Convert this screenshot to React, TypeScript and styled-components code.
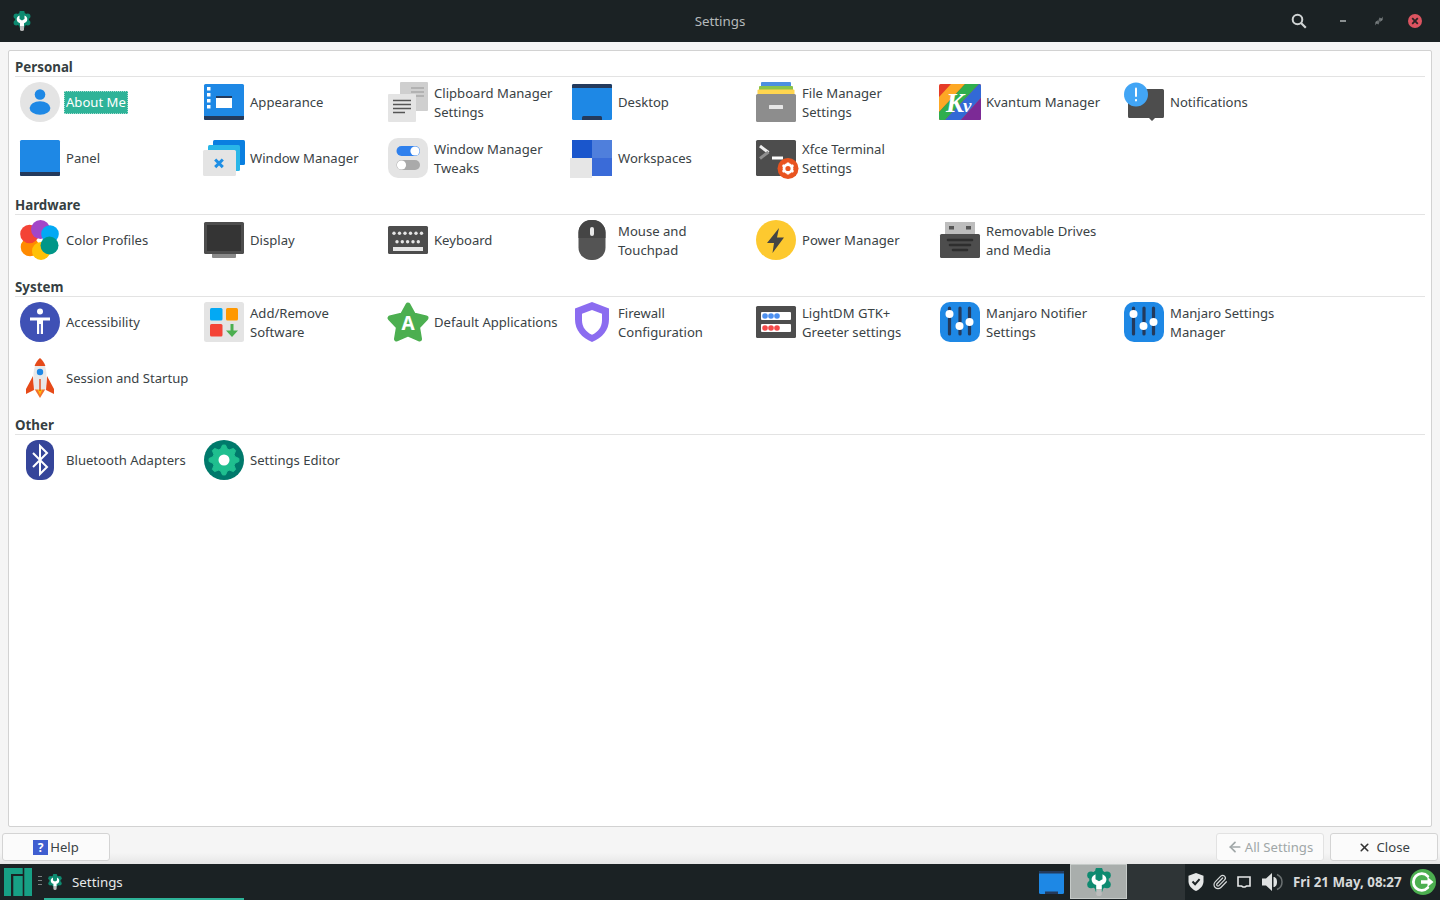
import React from "react";
import styled, { createGlobalStyle } from "styled-components";
import { ArrowLeft, Paperclip, X } from "lucide-react";

const Global = createGlobalStyle`
  html, body { margin: 0; padding: 0; height: 100%; overflow: hidden; }
  body { font-family: "Noto Sans", "Open Sans", sans-serif; font-size: 13.33px; color: #3a4245; }
  #root { height: 100%; }
`;

const Page = styled.div`
  width: 1440px;
  height: 900px;
  display: flex;
  flex-direction: column;
  background: #f5f5f5;
`;

const TitleBar = styled.header`
  height: 42px;
  flex: none;
  background: #1b2224;
  display: grid;
  grid-template-columns: 1fr auto 1fr;
  align-items: center;
  padding: 0 7px 0 12px;
`;

const TitleLeft = styled.div`
  display: flex;
  align-items: center;
`;

const TitleText = styled.div`
  color: #b4b9ba;
  font-size: 13.33px;
  line-height: 18px;
  margin: -1px 0 0 -5px;
`;

const TitleActions = styled.div`
  display: flex;
  justify-content: flex-end;
  align-items: center;
`;

const TitleAction = styled.div<{ $gap?: number }>`
  width: 36px;
  margin-right: ${(p) => p.$gap ?? 0}px;
  display: flex;
  justify-content: center;
`;

const Body = styled.main`
  flex: 1;
  display: flex;
  padding: 8px 8px 0;
  min-height: 0;
`;

const Frame = styled.div`
  flex: 1;
  background: #fff;
  border: 1px solid #d2d2d2;
  border-radius: 2px;
  padding: 6px 6px 0;
`;

const Section = styled.section`
  margin-bottom: 12px;
`;

const SectionTitle = styled.h2`
  margin: 0;
  height: 20px;
  box-sizing: border-box;
  border-bottom: 1px solid #e3e3e3;
  font-size: 13.33px;
  font-weight: 700;
  line-height: 20px;
  color: #363f42;
`;

const Grid = styled.div`
  display: grid;
  grid-template-columns: repeat(7, 184px);
  grid-auto-rows: 50px;
  row-gap: 6px;
  padding-left: 5px;
`;

const Item = styled.div`
  display: flex;
  align-items: center;
  gap: 6px;
`;

const IconSlot = styled.div`
  width: 40px;
  height: 40px;
  flex: none;
  svg { display: block; overflow: visible; }
`;

const Label = styled.div<{ $selected?: boolean; $double?: boolean }>`
  white-space: pre-line;
  font-size: 13.1px;
  line-height: 19px;
  padding-top: ${(p) => (p.$double ? "2px" : "0")};
  color: ${(p) => (p.$selected ? "#fff" : "#3a4245")};
  ${(p) =>
    p.$selected
      ? `background: #2eb398;
         margin-left: -2px;
         padding: 1px;
         line-height: 21px;
         & > span { display: block; padding: 0 1px; outline: 1px dotted rgba(255,255,255,.55); }`
      : ""}
`;

const ActionBar = styled.div`
  flex: none;
  height: 37px;
  padding: 6px 2px 3px;
  box-sizing: border-box;
  display: flex;
  justify-content: space-between;
  background: linear-gradient(#f5f5f5 70%, #e6e6e6);
`;

const ActionGroup = styled.div`
  display: flex;
  gap: 6px;
`;

const Btn = styled.button<{ $disabled?: boolean }>`
  width: 108px;
  height: 28px;
  box-sizing: border-box;
  display: flex;
  align-items: center;
  justify-content: center;
  gap: 2px;
  padding: 0;
  background: #fbfbfb;
  border: 1px solid ${(p) => (p.$disabled ? "#e2e2e2" : "#d4d4d4")};
  border-radius: 3px;
  font-family: inherit;
  font-size: 13.1px;
  color: ${(p) => (p.$disabled ? "#a0a7a8" : "#3a4245")};
`;

const HelpMark = styled.span`
  width: 15px;
  height: 15px;
  background: #3f5ed0;
  color: #fff;
  font-size: 12px;
  font-weight: 700;
  line-height: 15px;
  text-align: center;
`;

const Taskbar = styled.footer`
  flex: none;
  height: 36px;
  background: #1b2224;
  display: flex;
  align-items: stretch;
  padding-left: 4px;
`;

const LogoSlot = styled.div`
  display: flex;
  align-items: center;
  width: 28px;
  flex: none;
`;

const Handle = styled.div`
  width: 4px;
  margin: 12px 2px 0 6px;
  height: 12px;
  flex: none;
  background: repeating-linear-gradient(#7b8182 0 1px, transparent 1px 4px);
`;

const Task = styled.div`
  width: 200px;
  flex: none;
  box-sizing: border-box;
  border-bottom: 2px solid #2eb398;
  display: flex;
  align-items: center;
  padding: 1px 0 0 3px;
  gap: 9px;
  color: #e6e8e8;
  font-size: 13.33px;
`;

const Spacer = styled.div`
  flex: 1;
`;

const Pager = styled.div`
  width: 31px;
  display: flex;
  align-items: center;
  flex: none;
`;

const WorkspaceActive = styled.div`
  width: 57px;
  height: 35px;
  box-sizing: border-box;
  background: #a9aeac;
  border: 1px solid #c6cbc9;
  display: flex;
  align-items: center;
  justify-content: center;
  flex: none;
`;

const WorkspaceIdle = styled.div`
  width: 58px;
  background: #2e3436;
  flex: none;
`;

const Tray = styled.div`
  display: flex;
  align-items: center;
  width: 108px;
  flex: none;
`;

const TraySlot = styled.div<{ $w: number }>`
  width: ${(p) => p.$w}px;
  display: flex;
  justify-content: center;
  flex: none;
`;

const Clock = styled.div`
  flex: none;
  width: 117px;
  box-sizing: border-box;
  display: flex;
  align-items: center;
  color: #d6d9d9;
  font-size: 13.33px;
  font-weight: 700;
  white-space: nowrap;
`;

const LogoutSlot = styled.div`
  flex: none;
  width: 30px;
  display: flex;
  align-items: center;
`;

type IconProps = { s?: number };
const Svg: React.FC<{ children: React.ReactNode; s?: number; vb?: string }> = ({ children, s = 40, vb = "0 0 40 40" }) => (
  <svg width={s} height={s} viewBox={vb} xmlns="http://www.w3.org/2000/svg">
    {children}
  </svg>
);

const AboutIcon = () => (
  <Svg>
    <circle cx="20" cy="20" r="20" fill="#e4e4e4" />
    <circle cx="20" cy="12.5" r="5.3" fill="#1e88e5" />
    <ellipse cx="20" cy="26" rx="10.4" ry="6.8" fill="#1e88e5" />
  </Svg>
);
const AppearanceIcon = () => (
  <Svg>
    <rect y="2" width="40" height="36" rx="1.5" fill="#1e88e5" />
    <path d="M0 34h40v2.5a1.5 1.5 0 0 1-1.5 1.5h-37A1.5 1.5 0 0 1 0 36.500z" fill="#243a5c" />
    <path d="M3 5h3.500v3.500H3zM3 11h3.500v3.500H3zM3 17h3.500v3.500H3zM3 23h3.500v3.500H3z" fill="#fff" />
    <rect x="12" y="14" width="16" height="12" fill="#fff" />
    <rect x="12" y="14" width="16" height="2" fill="#243a5c" />
  </Svg>
);
const ClipboardIcon = () => (
  <Svg>
    <rect x="12" width="28" height="29" rx="1" fill="#cfcfcf" />
    <path d="M23 6h13M23 10h13M28 14h8" stroke="#a9a9a9" strokeWidth="1.4" />
    <rect y="12" width="28" height="28" rx="1" fill="#e4e4e4" />
    <path d="M5 18.500h18M5 22.500h18M5 26.500h18M5 30.500h12" stroke="#555" strokeWidth="1.4" />
  </Svg>
);
const DesktopIcon = () => (
  <Svg>
    <rect y="2" width="40" height="36" rx="1.5" fill="#1e88e5" />
    <path d="M0 6V3.500A1.500 1.500 0 0 1 1.500 2h37A1.500 1.500 0 0 1 40 3.500V6z" fill="#243a5c" />
    <path d="M10 38v-2.500A1.500 1.500 0 0 1 11.500 34h17a1.500 1.500 0 0 1 1.500 1.500V38z" fill="#243a5c" />
  </Svg>
);
const FileIcon = () => (
  <Svg>
    <rect x="5" width="30" height="8" rx="1" fill="#4b8fe0" />
    <rect x="3" y="4" width="34" height="8" rx="1" fill="#8bc34a" />
    <rect x="1.500" y="7.500" width="37" height="8" rx="1" fill="#ffd54f" />
    <rect y="12" width="40" height="28" rx="1.500" fill="#8d8d8d" />
    <rect x="13" y="23" width="14" height="4" rx=".5" fill="#e6e6e6" />
  </Svg>
);
const KvantumIcon = () => (
  <svg width="42" height="40" viewBox="0 0 42 40" style={{ marginLeft: -1 }}>
    <defs>
      <clipPath id="kvclip">
        <rect y="2" width="42" height="36" rx="1.500" />
      </clipPath>
    </defs>
    <g clipPath="url(#kvclip)">
      <rect y="2" width="42" height="36" fill="#e53c27" />
      <path d="M12 2h14L0 30V15z" fill="#fda825" />
      <path d="M26 2h14L6 38H0v-8z" fill="#2fae4e" />
      <path d="M40 2h2v14L22 38H6z" fill="#3269d6" />
      <path d="M42 16v22H22z" fill="#7c2a96" />
    </g>
    <text x="7" y="30" fontFamily="'Liberation Serif', serif" fontStyle="italic" fontWeight="700" fontSize="27" fill="#fff">K</text>
    <text x="24" y="30" fontFamily="'Liberation Serif', serif" fontStyle="italic" fontWeight="700" fontSize="19" fill="#fff">v</text>
  </svg>
);
const NotifyIcon = () => (
  <Svg>
    <path d="M5 7h33.500A1.500 1.500 0 0 1 40 8.500v26a1.500 1.500 0 0 1-1.500 1.500H31l-3 3-3-3H5.500A1.500 1.500 0 0 1 4 34.500V8z" fill="#4d4d4d" />
    <circle cx="12" cy="12.500" r="12" fill="#42a5f5" />
    <rect x="11" y="5.500" width="2" height="9.500" rx="1" fill="#fff" />
    <rect x="11" y="17" width="2" height="2.400" rx=".8" fill="#fff" />
  </Svg>
);
const PanelIcon = () => (
  <Svg>
    <rect y="2" width="40" height="36" rx="1.500" fill="#1e88e5" />
    <path d="M0 34h40v2.500a1.500 1.500 0 0 1-1.500 1.500h-37A1.500 1.500 0 0 1 0 36.500z" fill="#243a5c" />
  </Svg>
);
const WindowIcon = () => (
  <Svg>
    <rect x="9" y="2" width="32" height="25" rx="1.500" fill="#0a7fe0" />
    <rect x="4" y="7" width="32" height="26" rx="1.500" fill="#29b6e8" />
    <rect x="-1" y="12" width="33" height="26" rx="1.500" fill="#e4e4e4" />
    <path d="M11.200 21.500l7.600 7.600M18.800 21.500l-7.600 7.600" stroke="#1e8fe5" strokeWidth="3" />
  </Svg>
);
const TweaksIcon = () => (
  <Svg>
    <rect width="40" height="40" rx="10" fill="#e4e4e4" />
    <rect x="8.500" y="8" width="23.500" height="10" rx="5" fill="#2f80ed" />
    <circle cx="27" cy="13" r="4.600" fill="#fff" />
    <rect x="8.500" y="22" width="23.500" height="10" rx="5" fill="#aaa" />
    <circle cx="13.500" cy="27" r="4.600" fill="#fff" />
  </Svg>
);
const WorkspacesIcon = () => (
  <Svg>
    <rect x="0" y="2" width="20" height="18" fill="#1a56cc" />
    <rect x="20" y="2" width="20" height="18" fill="#4f7fdc" />
    <rect x="20" y="20" width="20" height="18" fill="#3a6bd8" />
    <rect x="-2" y="20" width="22" height="20" fill="#e6e6e6" />
  </Svg>
);
const TerminalIcon = () => (
  <Svg>
    <rect y="2" width="40" height="36" rx="1.500" fill="#4d4d4d" />
    <path d="M4 8l8.500 6.500" fill="none" stroke="#f0f0f0" strokeWidth="3" />
    <path d="M12.500 14L4 20.500" fill="none" stroke="#8f8f8f" strokeWidth="3" />
    <rect x="16" y="18.500" width="11" height="3" fill="#fff" />
    <circle cx="32" cy="30.500" r="10.500" fill="#e95420" />
    <circle cx="32" cy="30.500" r="4" fill="none" stroke="#fff" strokeWidth="2.800" />
    <path d="M32 24.500v2M32 34.500v2M26.500 27.300l1.800 1M35.700 32.700l1.800 1M26.500 33.700l1.800-1M35.700 28.300l1.800-1" stroke="#fff" strokeWidth="2.400" />
  </Svg>
);
const ColorIcon = () => (
  <Svg>
    <circle cx="10" cy="27" r="9.300" fill="#ff8a00" />
    <circle cx="21" cy="31" r="9" fill="#ffc107" />
    <circle cx="9.500" cy="14" r="9.300" fill="#f44336" />
    <circle cx="20.500" cy="9.500" r="9.500" fill="#a246c8" />
    <circle cx="30" cy="14" r="8.800" fill="#03a9f4" />
    <circle cx="29.500" cy="25.500" r="9" fill="#009688" />
  </Svg>
);
const DisplayIcon = () => (
  <Svg>
    <rect x="8" y="32" width="24" height="6" rx="1" fill="#8a8a8a" />
    <rect y="2" width="40" height="32" rx="1.500" fill="#4d4d4d" />
    <rect x="3" y="5" width="34" height="26" fill="#343434" />
  </Svg>
);
const KeyboardIcon = () => (
  <Svg>
    <rect y="6" width="40" height="28" rx="1.500" fill="#4d4d4d" />
    <g fill="#e6e6e6">
      {[6, 11.500, 17, 22.500, 28, 33.500].map((x) => (
        <circle key={x} cx={x} cy="13.300" r="1.700" />
      ))}
      {[9, 14.300, 19.600, 25, 30.300].map((x) => (
        <circle key={x} cx={x} cy="21.700" r="1.700" />
      ))}
      <rect x="5" y="27" width="30" height="4" />
    </g>
  </Svg>
);
const MouseIcon = () => (
  <Svg>
    <rect x="6.500" width="27" height="40" rx="12.500" fill="#545454" />
    <path d="M6.500 18v-5.500A12.500 12.500 0 0 1 19 0h2a12.500 12.500 0 0 1 12.500 12.500V18z" fill="#454545" />
    <rect x="18" y="7" width="4" height="9" rx="2" fill="#e8e8e8" />
  </Svg>
);
const PowerIcon = () => (
  <Svg>
    <circle cx="20" cy="20" r="20" fill="#fdc92f" />
    <path d="M23 8L11 23h7l-1.500 10L28 17.500h-7z" fill="#444" />
  </Svg>
);
const RemovableIcon = () => (
  <Svg>
    <rect x="5" y="2" width="30" height="13" fill="#bdbdbd" />
    <rect x="9" y="6" width="5" height="3.500" fill="#555" />
    <rect x="26" y="6" width="5" height="3.500" fill="#555" />
    <rect y="14" width="40" height="24" rx="1.500" fill="#4d4d4d" />
    <path d="M8 20h24M10 25h20M13 30h14" stroke="#2e2e2e" strokeWidth="2.600" strokeLinecap="round" />
  </Svg>
);
const AccessIcon = () => (
  <Svg>
    <circle cx="20" cy="20" r="20" fill="#3f51b5" />
    <circle cx="20" cy="9.500" r="3" fill="#fff" />
    <path d="M10 15.500h20v3h-7V32h-2.200v-10h-1.600v10H17V18.500h-7z" fill="#fff" />
  </Svg>
);
const AddRemoveIcon = () => (
  <Svg>
    <rect width="40" height="40" rx="2.500" fill="#e4e4e4" />
    <rect x="6" y="6" width="12.500" height="12.500" rx="1.500" fill="#03a9f4" />
    <rect x="22" y="6" width="12" height="12.500" rx="1.500" fill="#ff9800" />
    <rect x="6" y="22" width="12.500" height="12.500" rx="1.500" fill="#f44336" />
    <path d="M26.500 22h3v6.500H34L28 35l-6-6.500h4.500z" fill="#4caf50" />
  </Svg>
);
const DefaultIcon = () => (
  <Svg>
    <path d="M20 3L25.500 13 38 16 29.500 25 31.500 37 20 32 8.500 37 10.500 25 2 16 14.500 13Z" fill="#4caf50" stroke="#4caf50" strokeWidth="5" strokeLinejoin="round" />
    <text x="20" y="27.500" textAnchor="middle" fontFamily="'Noto Sans', sans-serif" fontWeight="700" fontSize="19" fill="#fff">A</text>
  </Svg>
);
const FirewallIcon = () => (
  <Svg>
    <path d="M20 0l17 6.500v11C37 28 30 36 20 40 10 36 3 28 3 17.500v-11z" fill="#8b6cf0" />
    <path d="M20 8l10 3.800v6.700c0 6.500-4 11.500-10 14.300-6-2.800-10-7.800-10-14.300v-6.700z" fill="#fff" />
  </Svg>
);
const LightdmIcon = () => (
  <Svg>
    <rect y="4" width="40" height="32" rx="1.500" fill="#4d4d4d" />
    <rect x="5" y="10" width="30" height="8" rx="1" fill="#fff" />
    <rect x="5" y="22" width="30" height="8" rx="1" fill="#fff" />
    {[9, 15, 21].map((x) => (
      <circle key={x} cx={x} cy="14" r="2.800" fill="#4d90f0" />
    ))}
    {[9, 15, 21].map((x) => (
      <circle key={x} cx={x} cy="26" r="2.800" fill="#f44848" />
    ))}
  </Svg>
);
const SlidersIcon = () => (
  <Svg>
    <rect width="40" height="40" rx="10" fill="#1e88e5" />
    <path d="M9.500 6v26M20 6v26M29.500 6v26" stroke="#243a5c" strokeWidth="3.200" strokeLinecap="round" />
    <circle cx="9.500" cy="12" r="4" fill="#fff" />
    <circle cx="19.500" cy="24" r="4" fill="#fff" />
    <circle cx="29.500" cy="20" r="4" fill="#fff" />
  </Svg>
);
const RocketIcon = () => (
  <Svg>
    <path d="M13 18l-7 13v5l8-4zM27 18l7 13v5l-8-4z" fill="#e64a19" />
    <path d="M14.500 31h11L20 40z" fill="#f4702e" />
    <path d="M17.500 31h5L20 37z" fill="#ffc107" />
    <path d="M20 0c-5 4-7 13-6.500 21 .2 4 .5 7 1 10.500h11c.5-3.500.8-6.500 1-10.500C27 13 25 4 20 0z" fill="#e8e8e8" />
    <path d="M20 0c-2.600 2-4.400 5-5.400 8h10.800C24.400 5 22.600 2 20 0z" fill="#e64a19" />
    <circle cx="20" cy="14" r="3.200" fill="#1e88e5" />
    <rect x="19.300" y="21" width="1.400" height="12" fill="#e64a19" />
  </Svg>
);
const BluetoothIcon = () => (
  <Svg>
    <rect x="6" width="28" height="40" rx="12" fill="#35459a" />
    <path d="M13 13l14 14-7 7V6l7 7-14 14" fill="none" stroke="#fff" strokeWidth="2" />
  </Svg>
);
const gearPath = (cx: number, cy: number, rOuter: number, rInner: number, teeth: number) => {
  const pts: string[] = [];
  const n = teeth * 4;
  for (let i = 0; i < n; i++) {
    const a = (i / n) * Math.PI * 2 - Math.PI / 2 - Math.PI / n;
    const r = i % 4 < 2 ? rOuter : rInner;
    pts.push(`${(cx + r * Math.cos(a)).toFixed(2)} ${(cy + r * Math.sin(a)).toFixed(2)}`);
  }
  return "M" + pts.join("L") + "Z";
};
const EditorIcon = () => (
  <Svg>
    <circle cx="20" cy="20" r="20" fill="#00796b" />
    <path d={gearPath(20, 20, 15, 11.500, 8)} fill="#1fbf8f" stroke="#1fbf8f" strokeLinejoin="round" />
    <circle cx="20" cy="20" r="5.500" fill="#fff" />
  </Svg>
);
const lobes = [0, 60, 120, 180, 240, 300];
const SettingsAppIcon = ({ s = 20 }: IconProps) => (
  <svg width={s} height={s} viewBox="0 0 20 20">
    <circle cx="10" cy="8.500" r="7" fill="#0e8a70" />
    {lobes.map((a) => (
      <circle
        key={a}
        cx={10 + 6.600 * Math.sin((a * Math.PI) / 180)}
        cy={8.500 - 6.600 * Math.cos((a * Math.PI) / 180)}
        r="2.700"
        fill="#0e8a70"
      />
    ))}
    <path d="M7.500 4.500C5.300 5.500 4.700 7 4.700 8.300c0 1.900 1.300 3.300 3.300 3.900V15h4v-2.800c2-.6 3.300-2 3.300-3.900 0-1.300-.6-2.800-2.800-3.800v3.600L10 9.500 7.500 8.100z" fill="#fff" />
    <path d="M8 15h4v3.500a2 1.500 0 0 1-4 0z" fill="#bdbdbd" />
  </svg>
);
const SearchIcon = () => (
  <svg width="16" height="16" viewBox="0 0 16 16">
    <circle cx="6.500" cy="6.500" r="4.800" fill="none" stroke="#d0d4d4" strokeWidth="2" />
    <path d="M10 10l4.800 4.800" stroke="#d0d4d4" strokeWidth="2.200" />
  </svg>
);
const MinIcon = () => (
  <svg width="8" height="4" viewBox="0 0 8 4">
    <rect x="1" y="1" width="6" height="2" fill="#8a9091" />
  </svg>
);
const MaxIcon = () => (
  <svg width="10" height="10" viewBox="0 0 10 10">
    <path d="M9 0.500L8 5 6.500 4zM1 9.500L2 5 3.500 6z" fill="#7c8283" />
    <path d="M5.500 1.500L9 3 6 6 4.500 4zM4.500 8.500L1 7 4 4 5.500 6z" fill="#7c8283" opacity=".8" />
  </svg>
);
const CloseIcon = () => (
  <svg width="14" height="14" viewBox="0 0 14 14">
    <circle cx="7" cy="7" r="7" fill="#dc5460" />
    <path d="M4.200 4.200l5.600 5.600M9.800 4.200l-5.600 5.600" stroke="#2a2224" strokeWidth="1.800" />
  </svg>
);
const ManjaroLogo = () => (
  <svg width="28" height="28" viewBox="0 0 28 28">
    <path d="M0 0h18.700v6H7v22H0zM9.300 8h9.400v20H9.300zM20.300 0H28v28h-7.700z" fill="#17a085" />
  </svg>
);
const TinyDesktop = () => (
  <svg width="25" height="23" viewBox="0 0 25 23">
    <rect width="25" height="23" rx="1.500" fill="#1e88e5" />
    <path d="M0 2.500V1.500A1.500 1.500 0 0 1 1.500 0h22A1.500 1.500 0 0 1 25 1.500v1z" fill="#243a5c" />
    <rect x="6" y="20.500" width="13" height="2.500" fill="#243a5c" />
  </svg>
);
const ShieldIcon = () => (
  <svg width="16" height="18" viewBox="0 0 16 18">
    <path d="M8 0l7.500 2.800v5.500c0 4.200-3 7.700-7.500 9.700C3.500 16 .5 12.500.5 8.300V2.800z" fill="#e6e8e8" />
    <path d="M4.500 8.500l2.600 2.700 4.500-5" fill="none" stroke="#1b2224" strokeWidth="2" />
  </svg>
);
const ScreenIcon = () => (
  <svg width="14" height="14" viewBox="0 0 14 14">
    <path d="M1 2h12v9H9.500l-1.500 1H6l-1.500-1H1z" fill="none" stroke="#e6e8e8" strokeWidth="1.600" />
  </svg>
);
const VolumeIcon = () => (
  <svg width="21" height="20" viewBox="0 0 21 20">
    <path d="M0 6.500h4L10 1v18l-6-5.500H0z" fill="#dfe2e2" />
    <path d="M11.500 5c2.500 0 3.500 2.500 3.500 5s-1 5-3.500 5z" fill="#dfe2e2" />
    <path d="M15 2.500c3.500 1.500 5 4.500 5 7.500s-1.500 6-5 7.500" fill="none" stroke="#6b7172" strokeWidth="1.500" />
  </svg>
);
const LogoutIcon = () => (
  <svg width="26" height="26" viewBox="0 0 26 26">
    <circle cx="13" cy="13" r="13" fill="#4caf50" />
    <path d="M17.800 7.400A8.300 8.300 0 1 0 17.800 18.600" fill="none" stroke="#fff" strokeWidth="2.800" strokeLinecap="round" />
    <path d="M11 11.300h6.500V8l6 5-6 5v-3.300H11z" fill="#fff" />
  </svg>
);

type Entry = { label: string; icon: React.FC; selected?: boolean };
const sections: { title: string; items: Entry[] }[] = [
  {
    title: "Personal",
    items: [
      { label: "About Me", icon: AboutIcon, selected: true },
      { label: "Appearance", icon: AppearanceIcon },
      { label: "Clipboard Manager\nSettings", icon: ClipboardIcon },
      { label: "Desktop", icon: DesktopIcon },
      { label: "File Manager\nSettings", icon: FileIcon },
      { label: "Kvantum Manager", icon: KvantumIcon },
      { label: "Notifications", icon: NotifyIcon },
      { label: "Panel", icon: PanelIcon },
      { label: "Window Manager", icon: WindowIcon },
      { label: "Window Manager\nTweaks", icon: TweaksIcon },
      { label: "Workspaces", icon: WorkspacesIcon },
      { label: "Xfce Terminal\nSettings", icon: TerminalIcon },
    ],
  },
  {
    title: "Hardware",
    items: [
      { label: "Color Profiles", icon: ColorIcon },
      { label: "Display", icon: DisplayIcon },
      { label: "Keyboard", icon: KeyboardIcon },
      { label: "Mouse and\nTouchpad", icon: MouseIcon },
      { label: "Power Manager", icon: PowerIcon },
      { label: "Removable Drives\nand Media", icon: RemovableIcon },
    ],
  },
  {
    title: "System",
    items: [
      { label: "Accessibility", icon: AccessIcon },
      { label: "Add/Remove\nSoftware", icon: AddRemoveIcon },
      { label: "Default Applications", icon: DefaultIcon },
      { label: "Firewall\nConfiguration", icon: FirewallIcon },
      { label: "LightDM GTK+\nGreeter settings", icon: LightdmIcon },
      { label: "Manjaro Notifier\nSettings", icon: SlidersIcon },
      { label: "Manjaro Settings\nManager", icon: SlidersIcon },
      { label: "Session and Startup", icon: RocketIcon },
    ],
  },
  {
    title: "Other",
    items: [
      { label: "Bluetooth Adapters", icon: BluetoothIcon },
      { label: "Settings Editor", icon: EditorIcon },
    ],
  },
];

export default function App() {
  return (
    <Page>
      <Global />
      <TitleBar>
        <TitleLeft>
          <SettingsAppIcon s={20} />
        </TitleLeft>
        <TitleText>Settings</TitleText>
        <TitleActions>
          <TitleAction $gap={8}>
            <SearchIcon />
          </TitleAction>
          <TitleAction>
            <MinIcon />
          </TitleAction>
          <TitleAction>
            <MaxIcon />
          </TitleAction>
          <TitleAction>
            <CloseIcon />
          </TitleAction>
        </TitleActions>
      </TitleBar>
      <Body>
        <Frame>
          {sections.map((sec) => (
            <Section key={sec.title}>
              <SectionTitle>{sec.title}</SectionTitle>
              <Grid>
                {sec.items.map((it) => (
                  <Item key={it.label}>
                    <IconSlot>
                      <it.icon />
                    </IconSlot>
                    <Label $selected={it.selected} $double={it.label.includes("\n")}>
                      {it.selected ? <span>{it.label}</span> : it.label}
                    </Label>
                  </Item>
                ))}
              </Grid>
            </Section>
          ))}
        </Frame>
      </Body>
      <ActionBar>
        <Btn>
          <HelpMark>?</HelpMark>
          Help
        </Btn>
        <ActionGroup>
          <Btn $disabled>
            <ArrowLeft size={16} strokeWidth={2.6} />
            All Settings
          </Btn>
          <Btn>
            <X size={13} strokeWidth={3} color="#333" />
            &nbsp;Close
          </Btn>
        </ActionGroup>
      </ActionBar>
      <Taskbar>
        <LogoSlot>
          <ManjaroLogo />
        </LogoSlot>
        <Handle />
        <Task>
          <SettingsAppIcon s={16} />
          Settings
        </Task>
        <Spacer />
        <Pager>
          <TinyDesktop />
        </Pager>
        <WorkspaceActive>
          <SettingsAppIcon s={28} />
        </WorkspaceActive>
        <WorkspaceIdle />
        <Tray>
          <TraySlot $w={22}>
            <ShieldIcon />
          </TraySlot>
          <TraySlot $w={26}>
            <Paperclip size={16} strokeWidth={1.8} color="#d8dbdb" />
          </TraySlot>
          <TraySlot $w={22}>
            <ScreenIcon />
          </TraySlot>
          <TraySlot $w={34}>
            <VolumeIcon />
          </TraySlot>
        </Tray>
        <Clock>Fri 21 May, 08:27</Clock>
        <LogoutSlot>
          <LogoutIcon />
        </LogoutSlot>
      </Taskbar>
    </Page>
  );
}
